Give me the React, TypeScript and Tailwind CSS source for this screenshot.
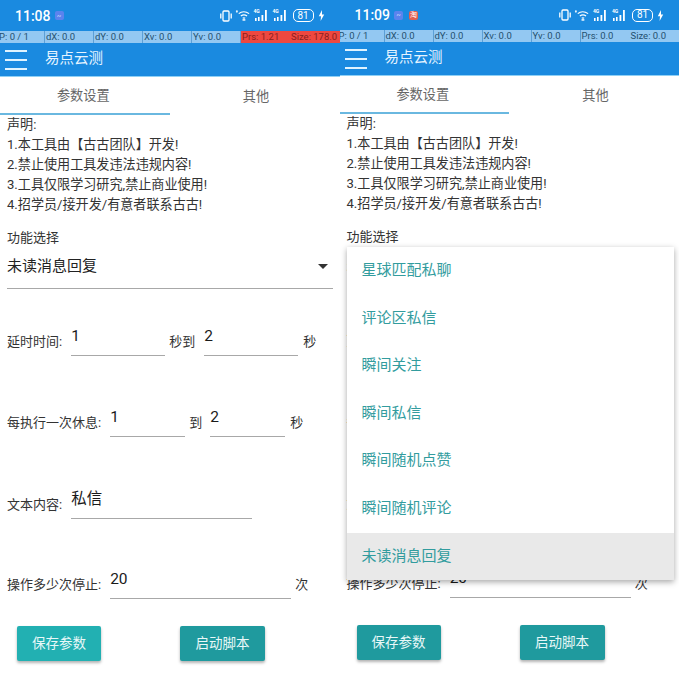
import React from "react";

const FONT = '"Roboto","Noto Sans CJK SC",sans-serif';

function StatusIcons() {
  return (
    <div className="flex items-center gap-[3px] text-white">
      <svg width="12" height="12" viewBox="0 0 12 12" fill="none" stroke="white" strokeWidth="1.3">
        <rect x="3" y="1" width="6" height="10" rx="1" />
        <path d="M.8 3.5v5M11.2 3.5v5" strokeWidth="1.3" />
      </svg>
      <svg width="16" height="13" viewBox="0 0 17 13" fill="none" stroke="white" strokeWidth="1.3">
        <path d="M4 4.5c3-2.6 7.5-2.6 11 0" />
        <path d="M6.2 7c2-1.5 4.6-1.5 6.6 0" />
        <path d="M8.2 9.4c1-.7 1.6-.7 2.6 0" />
        <path d="M2 1l0 2.6M1 2h2" strokeWidth="1" />
        <rect x="8" y="10.4" width="3" height="1.6" fill="white" stroke="none" />
      </svg>
      <Signal />
      <Signal />
      <div className="ml-[1px] flex h-[13px] w-[21px] items-center justify-center rounded-[5px] border border-white text-[10px] leading-none text-white">81</div>
      <svg width="7" height="11" viewBox="0 0 7 11" fill="white" className="ml-[1px]">
        <path d="M4 0 0.8 6.2H3L2.6 11 6.2 4.6H4Z" />
      </svg>
    </div>
  );
}

function Signal() {
  return (
    <div className="relative h-[13px] w-[16px]">
      <span className="absolute left-0 top-[-1px] text-[5px] font-bold leading-[7px] text-white">4G</span>
      <svg width="16" height="13" viewBox="0 0 16 13" fill="white" className="absolute left-0 top-0">
        <rect x="1" y="9" width="1.6" height="3" />
        <rect x="4" y="8" width="1.6" height="4" />
        <rect x="7.5" y="6" width="1.8" height="6" />
        <rect x="11" y="1" width="1.8" height="11" />
      </svg>
    </div>
  );
}

function PointerBar({ alert, prs, size }: { alert?: boolean; prs: string; size: string }) {
  const cells = [
    ["P: 0 / 1", "w-[47px]", "-ml-[2px]"],
    ["dX: 0.0", "w-[49px]", ""],
    ["dY: 0.0", "w-[49px]", ""],
    ["Xv: 0.0", "w-[49px]", ""],
    ["Yv: 0.0", "w-[49px]", ""],
  ];
  return (
    <div className="flex h-[12px] overflow-hidden bg-[#93c8f2] text-[9.5px] leading-[12px] text-[#24506f]">
      {cells.map(([t, w, m]) => (
        <div key={t} className={`${w} shrink-0 whitespace-nowrap border-r border-[#5c9fd6] ${m} pl-[1px]`}>{t}</div>
      ))}
      <div className={`flex flex-1 whitespace-nowrap pl-[1px] ${alert ? "bg-[#ee4840] text-[#8a1f1c]" : ""}`}>
        <span className="w-[49px] shrink-0">{prs}</span>
        <span>{size}</span>
      </div>
    </div>
  );
}

function Field({ w, value }: { w: string; value: string }) {
  return (
    <div className={`${w} shrink-0`}>
      <div className="h-[38px] pt-[9px] text-[15.5px] leading-[20px] text-[#1a1a1a]">{value}</div>
      <div className="h-[1px] bg-[#a8a8a8]" />
    </div>
  );
}

function Row({ children, mt }: { children: React.ReactNode; mt: string }) {
  return <div className={`flex h-[39px] items-start pl-[7px] ${mt}`}>{children}</div>;
}

function Label({ children, cls = "" }: { children: React.ReactNode; cls?: string }) {
  return <span className={`mt-[16px] whitespace-nowrap text-[13px] leading-[18px] text-[#333333] ${cls}`}>{children}</span>;
}

const MENU = ["星球匹配私聊", "评论区私信", "瞬间关注", "瞬间私信", "瞬间随机点赞", "瞬间随机评论", "未读消息回复"];

function Panel({ second }: { second?: boolean }) {
  return (
    <div className="relative h-[679px] w-[339.5px] shrink-0 overflow-hidden bg-white" style={{ fontFamily: FONT }}>
      <div className={`flex items-center bg-[#1a8ae0] pl-[15px] pr-[15px] ${second ? "h-[30px]" : "h-[31px]"}`}>
        <span className="text-[14px] font-medium leading-none text-white">{second ? "11:09" : "11:08"}</span>
        <span className="ml-[4px] flex h-[9px] w-[9px] items-center justify-center rounded-[2px] bg-[#5a83ee] text-[6px] leading-none text-white">~</span>
        {second && <span className="ml-[6px] flex h-[9px] w-[9px] items-center justify-center rounded-[2px] bg-[#e0604f] text-[7px] leading-none text-white">淘</span>}
        <div className="ml-auto"><StatusIcons /></div>
      </div>
      <PointerBar alert={!second} prs={second ? "Prs: 0.0" : "Prs: 1.21"} size={second ? "Size: 0.0" : "Size: 178.0"} />
      <div className="flex h-[33px] items-center bg-[#1a8ae0]">
        <div className="ml-[5px] flex w-[22px] flex-col gap-[7px]">
          <div className="h-[2px] bg-[#dff3ff]" />
          <div className="h-[2px] bg-[#dff3ff]" />
          <div className="h-[2px] bg-[#dff3ff]" />
        </div>
        <span className="ml-[18px] text-[14.5px] leading-none text-[#e6f4ff]">易点云测</span>
      </div>
      <div className="h-[1px] bg-[#8fd0f5]" />
      <div className="flex h-[38px]">
        <div className="flex w-[169.5px] items-center justify-center border-b-2 border-[#6ab8e0] pr-[3px] pt-[1px] text-[13.2px] text-[#666666]">参数设置</div>
        <div className="flex flex-1 items-center justify-center pl-[3px] pt-[1px] text-[13.2px] text-[#666666]">其他</div>
      </div>
      <div className="pl-[7px] pt-[0px] text-[13.1px] leading-[20px] text-[#333333]">
        <div>声明:</div>
        <div>1.本工具由【古古团队】开发!</div>
        <div>2.禁止使用工具发违法违规内容!</div>
        <div>3.工具仅限学习研究,禁止商业使用!</div>
        <div>4.招学员/接开发/有意者联系古古!</div>
      </div>
      <div className="mt-[14px] pl-[7px] text-[13px] leading-[18px] text-[#333333]">功能选择</div>
      <div className="mt-[9px] flex h-[32px] items-center pb-[12px] pl-[7px] pr-[12px]">
        <span className="text-[15px] leading-[20px] text-[#222222]">未读消息回复</span>
        <span className="ml-auto h-0 w-0 border-x-[5px] border-t-[5px] border-x-transparent border-t-[#333333]" />
      </div>
      <div className="ml-[7px] h-[1px] w-[326px] bg-[#a8a8a8]" />

      <Row mt="mt-[28px]">
        <Label>延时时间:</Label>
        <div className="ml-[9px]"><Field w="w-[94px]" value="1" /></div>
        <Label cls="ml-[4px] w-[35px]">秒到</Label>
        <Field w="w-[94px]" value="2" />
        <Label cls="ml-[5px]">秒</Label>
      </Row>
      <Row mt="mt-[42px]">
        <Label>每执行一次休息:</Label>
        <div className="ml-[9px]"><Field w="w-[75px]" value="1" /></div>
        <Label cls="ml-[4px] w-[21px]">到</Label>
        <Field w="w-[75px]" value="2" />
        <Label cls="ml-[5px]">秒</Label>
      </Row>
      <Row mt="mt-[43px]">
        <Label>文本内容:</Label>
        <div className="ml-[9px]"><Field w="w-[181px]" value="私信" /></div>
      </Row>
      <Row mt="mt-[41px]">
        <Label>操作多少次停止:</Label>
        <div className="ml-[9px]"><Field w="w-[181px]" value="20" /></div>
        <Label cls="ml-[4px]">次</Label>
      </Row>
      <div className="mt-[27px] flex pl-[17px]">
        <button className={`h-[35px] w-[84px] rounded-[2px] text-[13.5px] text-[#e8f8f8] shadow-[0_2px_3px_rgba(0,0,0,0.3)] ${second ? "bg-[#1f9a9e]" : "bg-[#22b0b2]"}`}>保存参数</button>
        <button className="ml-[79px] h-[35px] w-[85px] rounded-[2px] bg-[#1f9a9e] text-[13.5px] text-[#e8f8f8] shadow-[0_2px_3px_rgba(0,0,0,0.3)]">启动脚本</button>
      </div>

      {second && (
        <div className="absolute left-[7px] top-[247px] w-[327px] bg-white shadow-[0_2px_6px_rgba(0,0,0,0.35)]">
          {MENU.map((m, i) => (
            <div
              key={m}
              className={`flex h-[47.6px] items-center pb-[1px] pl-[15px] text-[15px] text-[#329c9e] ${i === MENU.length - 1 ? "bg-[#e9e9e9]" : ""}`}
            >
              {m}
            </div>
          ))}
        </div>
      )}
    </div>
  );
}

export default function App() {
  return (
    <div className="flex h-[679px] w-[679px] overflow-hidden bg-white">
      <Panel />
      <Panel second />
    </div>
  );
}
